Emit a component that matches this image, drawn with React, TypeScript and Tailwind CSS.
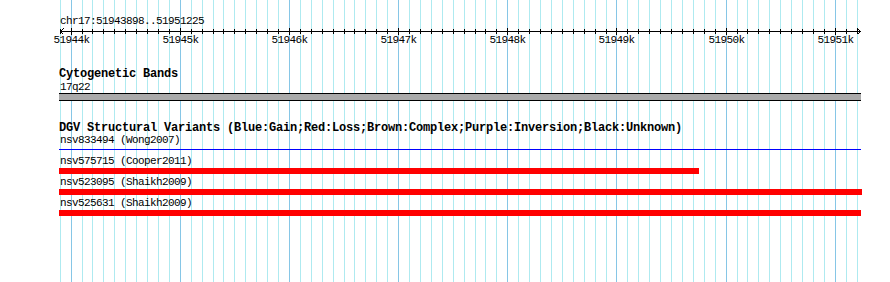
import React from 'react';

const START = 51943898;
const END = 51951225;
const LEFT = 60;
const WIDTH = 800;

const toX = (bp: number) => Math.floor(LEFT + ((bp - START) * WIDTH) / (END - START + 1));

type Variant = {
  name: string;
  source: string;
  end: number; // pixel end of bar
};

const variants: Variant[] = [
  { name: 'nsv575715', source: 'Cooper2011', end: 699 },
  { name: 'nsv523095', source: 'Shaikh2009', end: 862 },
  { name: 'nsv525631', source: 'Shaikh2009', end: 861 },
];

const minorTicks: number[] = [];
for (let bp = 51943900; bp <= 51951200; bp += 100) minorTicks.push(bp);
const majorTicks = minorTicks.filter((bp) => bp % 1000 === 0);

const Grid: React.FC = () => (
  <svg className="absolute inset-0" width={890} height={282} shapeRendering="crispEdges">
    {minorTicks.map((bp) => (
      <rect
        key={bp}
        x={toX(bp)}
        y={0}
        width={1}
        height={282}
        fill={bp % 1000 === 0 ? '#86c6e6' : '#aeeaf0'}
      />
    ))}
    {/* ruler */}
    <rect x={60} y={31} width={801} height={1} fill="#000" />
    <path d="M60.5 31.5 L63.5 28.5 M60.5 31.5 L63.5 34.5" stroke="#000" fill="none" />
    <path d="M860.5 31.5 L857.5 28.5 M860.5 31.5 L857.5 34.5" stroke="#000" fill="none" />
    {minorTicks.map((bp) =>
      bp % 1000 === 0 ? (
        <rect key={'t' + bp} x={toX(bp)} y={28} width={1} height={7} fill="#000" />
      ) : (
        <rect key={'t' + bp} x={toX(bp)} y={29} width={1} height={5} fill="#000" />
      )
    )}
  </svg>
);

const small = 'text-[11px] leading-[13px] tracking-[-0.6px]';
const bold = 'text-[12px] leading-[13px] tracking-[-0.2px] font-bold';

export default function App() {
  return (
    <div className="relative w-[890px] h-[282px] overflow-hidden bg-white text-black font-['Liberation_Mono',monospace]">
      <Grid />
      {majorTicks.map((bp) => (
        <div
          key={bp}
          className={`absolute top-[34px] -translate-x-1/2 ${small}`}
          style={{ left: toX(bp) + 0.5 }}
        >
          {Math.round(bp / 1000)}k
        </div>
      ))}
      <div className="relative pl-[60px] flex flex-col">
        <div className={`mt-[15px] ${small}`}>chr17:51943898..51951225</div>

        {/* Cytogenetic Bands */}
        <div className={`mt-[40px] ml-[-1px] ${bold}`}>Cytogenetic Bands</div>
        <div className={small}>17q22</div>
        <div className="mt-[-1px] ml-[-1px] w-[802px] h-[8px] border-y border-black bg-[#aaaaaa]" />

        {/* DGV */}
        <div className={`mt-[21px] ml-[-1px] ${bold}`}>
          DGV Structural Variants (Blue:Gain;Red:Loss;Brown:Complex;Purple:Inversion;Black:Unknown)
        </div>
        <div className={`mt-[-1px] ${small}`}>nsv833494 (Wong2007)</div>
        <div className="mt-[2px] ml-[-1px] w-[802px] h-px bg-[#0000ff]" />
        {variants.map((v, i) => (
          <div key={v.name} className="flex flex-col">
            <div className={`${i === 0 ? 'mt-[5px]' : 'mt-[2px]'} ${small}`}>
              {v.name} ({v.source})
            </div>
            <div className="ml-[-1px] h-[6px] bg-[#ff0000]" style={{ width: v.end - 59 }} />
          </div>
        ))}
      </div>
    </div>
  );
}
